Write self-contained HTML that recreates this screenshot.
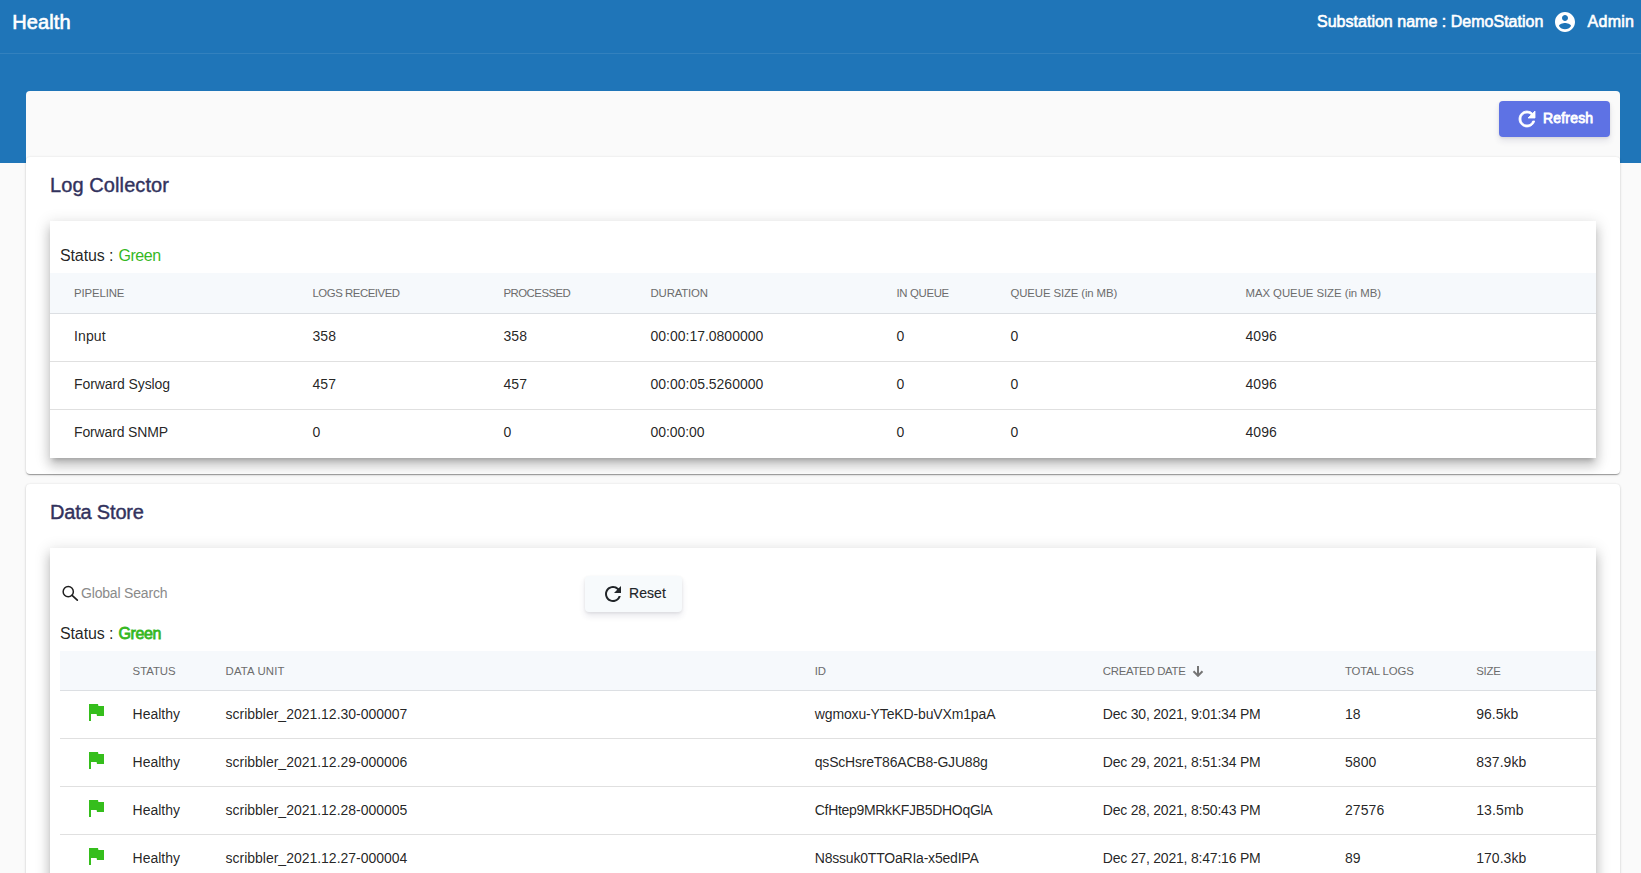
<!DOCTYPE html>
<html lang="en"><head><meta charset="utf-8"><title>Health</title>
<style>
html,body{margin:0;padding:0}
body{width:1641px;height:873px;overflow:hidden;background:#fafafa;font-family:"Liberation Sans", sans-serif;color:rgba(0,0,0,.87);position:relative}
.tx{white-space:nowrap}
.title,.sub,.admin{-webkit-text-stroke:.6px currentColor}
.btn-refresh .tx{-webkit-text-stroke:.8px currentColor}
.card h2{-webkit-text-stroke:.4px currentColor}
.status .b{-webkit-text-stroke:.8px currentColor}
.btn-reset .tx{-webkit-text-stroke:.15px currentColor}
.topbar{position:absolute;left:0;top:0;width:1641px;height:163px;background:#1f75b8}
.topbar .line{position:absolute;left:0;top:53px;width:100%;height:1px;background:rgba(255,255,255,.09)}
.title{position:absolute;left:12.2px;top:0;height:44px;line-height:44px;font-size:20px;font-weight:400;color:#fff}
.sub{position:absolute;left:1317px;top:0;height:43px;line-height:43px;font-size:16px;font-weight:400;color:#fff}
.acct{position:absolute;left:1553.2px;top:10px;width:24px;height:24px}
.admin{position:absolute;left:1587.6px;top:0;height:43px;line-height:43px;font-size:16px;font-weight:400;color:#fff}
.shell{position:absolute;left:26px;top:91px;width:1594px;height:120px;background:#fafafa;border-radius:4px}
.btn-refresh{position:absolute;left:1499px;top:101px;width:111px;height:36px;border-radius:4px;background:#5e72e4;color:#fff;box-shadow:0 4px 6px rgba(50,50,93,.11),0 1px 3px rgba(0,0,0,.08)}
.btn-refresh svg{position:absolute;left:16px;top:6px}
.btn-refresh .tx{position:absolute;left:44px;top:0;line-height:35px;font-size:14px;font-weight:400}
.card{position:absolute;left:26px;width:1594px;background:#fff;border-radius:4px;box-shadow:0 2px 1px -1px rgba(0,0,0,.2),0 1px 1px 0 rgba(0,0,0,.14),0 1px 3px 0 rgba(0,0,0,.12),0 0 2px 0 rgba(0,0,0,.08)}
.card h2{position:absolute;left:24px;top:12px;margin:0;font-size:20px;line-height:32px;font-weight:400;color:#32325d}
.inner{position:absolute;left:24px;top:64px;width:1546px;background:#fff;box-shadow:0 5px 5px -3px rgba(0,0,0,.2),0 8px 10px 1px rgba(0,0,0,.14),0 3px 14px 2px rgba(0,0,0,.12)}
.status{position:absolute;left:10px;font-size:16px;line-height:24px;color:rgba(0,0,0,.87)}
.status .g{color:#35b81f;margin-left:1px}
.tbl{position:absolute}
.hrow{position:relative;height:40px;background:#f6f9fc;border-bottom:1px solid #dcdfe3;box-sizing:border-box;font-size:11.4px;line-height:41px;color:#6c6c6c}
.row{position:relative;height:48px;border-bottom:1px solid #e0e0e0;box-sizing:border-box;font-size:14px;line-height:47px;color:rgba(0,0,0,.87)}
.row.last{border-bottom-color:transparent}
.hrow.lc{height:41px}
.row.lc{line-height:44px}
.c{position:absolute;top:0;white-space:nowrap}
.flag{position:absolute;left:0;top:9px}
.arrow{position:relative;top:2px;margin-left:6.5px}
.search{position:absolute;left:12px;top:37px}
.search-t{position:absolute;left:31px;top:33px;font-size:14px;line-height:24px;color:#8a8a8a}
.btn-reset{position:absolute;left:535px;top:28px;width:97px;height:36px;border-radius:4px;background:#f7fafc;color:#212529;box-shadow:0 4px 6px rgba(50,50,93,.11),0 1px 3px rgba(0,0,0,.08)}
.btn-reset svg{position:absolute;left:16px;top:6px}
.btn-reset .tx{position:absolute;left:44px;top:0;line-height:35px;font-size:14px;font-weight:400}
</style></head>
<body>
<div class="topbar"><div class="line"></div>
<div class="title"><span id="t1" class="tx " style="letter-spacing:0.125px;">Health</span></div>
<div class="sub"><span id="t2" class="tx " style="letter-spacing:0.017px;">Substation name : DemoStation</span></div>
<div class="acct"><svg viewBox="0 0 24 24" width="24" height="24"><path fill="#fff" d="M12 2C6.480 2 2 6.480 2 12s4.480 10 10 10 10-4.480 10-10S17.520 2 12 2zm0 3c1.660 0 3 1.340 3 3s-1.340 3-3 3-3-1.340-3-3 1.340-3 3-3zm0 14.200a7.200 7.200 0 0 1-6-3.220c.03-1.990 4-3.080 6-3.080 1.990 0 5.970 1.090 6 3.080a7.200 7.200 0 0 1-6 3.220z"/></svg></div>
<div class="admin"><span id="t3" class="tx " style="letter-spacing:0.237px;">Admin</span></div>
</div>
<div class="shell"></div>
<div class="btn-refresh"><svg viewBox="0 0 24 24" width="24" height="24"><path fill="currentColor" stroke="currentColor" stroke-width=".8" d="M17.65 6.35A7.958 7.958 0 0 0 12 4c-4.420 0-7.990 3.580-7.990 8s3.570 8 7.990 8c3.730 0 6.840-2.550 7.730-6h-2.080A5.990 5.990 0 0 1 12 18c-3.310 0-6-2.690-6-6s2.690-6 6-6c1.660 0 3.140.69 4.220 1.780L13 11h7V4l-2.350 2.350z"/></svg><span id="t4" class="tx " style="letter-spacing:0.181px;">Refresh</span></div>

<div class="card" style="top:157px;height:317px">
<h2><span id="t5" class="tx " style="letter-spacing:0.094px;">Log Collector</span></h2>
<div class="inner" style="height:237px">
<div class="status" style="top:23px"><span id="t6" class="tx " style="letter-spacing:-0.127px;">Status : </span><span id="t7" class="tx g" style="letter-spacing:-0.497px;">Green</span></div>
<div class="tbl" style="left:0;top:52px;width:1546px">
<div class="hrow lc"><div class="c" style="left:24px"><span id="t8" class="tx " style="letter-spacing:-0.117px;">PIPELINE</span></div><div class="c" style="left:262.5px"><span id="t9" class="tx " style="letter-spacing:-0.462px;">LOGS RECEIVED</span></div><div class="c" style="left:453.5px"><span id="t10" class="tx " style="letter-spacing:-0.526px;">PROCESSED</span></div><div class="c" style="left:600.5px"><span id="t11" class="tx " style="letter-spacing:-0.158px;">DURATION</span></div><div class="c" style="left:846.5px"><span id="t12" class="tx " style="letter-spacing:-0.350px;">IN QUEUE</span></div><div class="c" style="left:960.5px"><span id="t13" class="tx " style="letter-spacing:-0.127px;">QUEUE SIZE (in MB)</span></div><div class="c" style="left:1195.5px"><span id="t14" class="tx " style="letter-spacing:-0.056px;">MAX QUEUE SIZE (in MB)</span></div></div>
<div class="row lc"><div class="c" style="left:24px"><span id="t15" class="tx " style="letter-spacing:0.113px;">Input</span></div><div class="c" style="left:262.5px"><span id="t16" class="tx " style="letter-spacing:0.083px;">358</span></div><div class="c" style="left:453.5px"><span id="t17" class="tx " style="letter-spacing:0.083px;">358</span></div><div class="c" style="left:600.5px"><span id="t18" class="tx " style="letter-spacing:-0.008px;">00:00:17.0800000</span></div><div class="c" style="left:846.5px"><span id="t19" class="tx " style="letter-spacing:0.078px;">0</span></div><div class="c" style="left:960.5px"><span id="t20" class="tx " style="letter-spacing:0.078px;">0</span></div><div class="c" style="left:1195.5px"><span id="t21" class="tx " style="letter-spacing:0.082px;">4096</span></div></div>
<div class="row lc"><div class="c" style="left:24px"><span id="t22" class="tx " style="letter-spacing:-0.092px;">Forward Syslog</span></div><div class="c" style="left:262.5px"><span id="t23" class="tx " style="letter-spacing:0.083px;">457</span></div><div class="c" style="left:453.5px"><span id="t24" class="tx " style="letter-spacing:0.083px;">457</span></div><div class="c" style="left:600.5px"><span id="t25" class="tx " style="letter-spacing:-0.008px;">00:00:05.5260000</span></div><div class="c" style="left:846.5px"><span id="t26" class="tx " style="letter-spacing:0.078px;">0</span></div><div class="c" style="left:960.5px"><span id="t27" class="tx " style="letter-spacing:0.078px;">0</span></div><div class="c" style="left:1195.5px"><span id="t28" class="tx " style="letter-spacing:0.082px;">4096</span></div></div>
<div class="row lc last"><div class="c" style="left:24px"><span id="t29" class="tx " style="letter-spacing:-0.147px;">Forward SNMP</span></div><div class="c" style="left:262.5px"><span id="t30" class="tx " style="letter-spacing:0.078px;">0</span></div><div class="c" style="left:453.5px"><span id="t31" class="tx " style="letter-spacing:0.078px;">0</span></div><div class="c" style="left:600.5px"><span id="t32" class="tx " style="letter-spacing:-0.062px;">00:00:00</span></div><div class="c" style="left:846.5px"><span id="t33" class="tx " style="letter-spacing:0.078px;">0</span></div><div class="c" style="left:960.5px"><span id="t34" class="tx " style="letter-spacing:0.078px;">0</span></div><div class="c" style="left:1195.5px"><span id="t35" class="tx " style="letter-spacing:0.082px;">4096</span></div></div>
</div>
</div>
</div>

<div class="card" style="top:484px;height:420px">
<h2><span id="t36" class="tx " style="letter-spacing:-0.188px;">Data Store</span></h2>
<div class="inner" style="height:360px">
<div class="search"><svg viewBox="0 0 17 17" width="17" height="17"><circle cx="6.250" cy="6.650" r="5.100" fill="none" stroke="#1f1f1f" stroke-width="1.500"/><path d="M10.100 10.400L15.300 15.100" stroke="#1f1f1f" stroke-width="1.700" stroke-linecap="round"/></svg></div>
<div class="search-t"><span id="t37" class="tx " style="letter-spacing:-0.186px;">Global Search</span></div>
<div class="btn-reset"><svg viewBox="0 0 24 24" width="24" height="24"><path fill="currentColor" d="M17.65 6.35A7.958 7.958 0 0 0 12 4c-4.420 0-7.990 3.580-7.990 8s3.570 8 7.990 8c3.730 0 6.840-2.550 7.730-6h-2.080A5.990 5.990 0 0 1 12 18c-3.310 0-6-2.690-6-6s2.690-6 6-6c1.660 0 3.140.69 4.220 1.780L13 11h7V4l-2.350 2.350z"/></svg><span id="t38" class="tx " style="letter-spacing:0.064px;">Reset</span></div>
<div class="status" style="top:74px"><span id="t39" class="tx " style="letter-spacing:-0.127px;">Status : </span><span id="t40" class="tx g b" style="letter-spacing:-0.403px;font-weight:400">Green</span></div>
<div class="tbl" style="left:10px;top:103px;width:1536px">
<div class="hrow"><div class="c" style="left:72.6px"><span id="t41" class="tx " style="letter-spacing:-0.047px;">STATUS</span></div><div class="c" style="left:165.6px"><span id="t42" class="tx " style="letter-spacing:0.125px;">DATA UNIT</span></div><div class="c" style="left:754.8px"><span id="t43" class="tx " style="letter-spacing:-0.133px;">ID</span></div><div class="c" style="left:1042.8px"><span id="t44" class="tx " style="letter-spacing:-0.296px;">CREATED DATE</span><svg class="arrow" viewBox="0 0 12 12" width="12" height="12"><path d="M6 1v10M1.500 6.300L6 10.800l4.500-4.500" fill="none" stroke="#757575" stroke-width="2"/></svg></div><div class="c" style="left:1285px"><span id="t45" class="tx " style="letter-spacing:-0.136px;">TOTAL LOGS</span></div><div class="c" style="left:1416.2px"><span id="t46" class="tx " style="letter-spacing:-0.230px;">SIZE</span></div></div>
<div class="row"><div class="c" style="left:24px"><svg class="flag" viewBox="0 0 24 24" width="24" height="24"><path fill="#35be1c" d="M14.400 6L14 4H5v17h2v-7h5.600l.4 2h7V6z"/></svg></div><div class="c" style="left:72.6px"><span id="t47" class="tx " style="letter-spacing:-0.016px;">Healthy</span></div><div class="c" style="left:165.6px"><span id="t48" class="tx " style="letter-spacing:-0.015px;">scribbler_2021.12.30-000007</span></div><div class="c" style="left:754.8px"><span id="t49" class="tx " style="letter-spacing:-0.141px;">wgmoxu-YTeKD-buVXm1paA</span></div><div class="c" style="left:1042.8px"><span id="t50" class="tx " style="letter-spacing:-0.206px;">Dec 30, 2021, 9:01:34 PM</span></div><div class="c" style="left:1285px"><span id="t51" class="tx " style="letter-spacing:0.086px;">18</span></div><div class="c" style="left:1416.2px"><span id="t52" class="tx " style="letter-spacing:0.036px;">96.5kb</span></div></div>
<div class="row"><div class="c" style="left:24px"><svg class="flag" viewBox="0 0 24 24" width="24" height="24"><path fill="#35be1c" d="M14.400 6L14 4H5v17h2v-7h5.600l.4 2h7V6z"/></svg></div><div class="c" style="left:72.6px"><span id="t53" class="tx " style="letter-spacing:-0.016px;">Healthy</span></div><div class="c" style="left:165.6px"><span id="t54" class="tx " style="letter-spacing:-0.015px;">scribbler_2021.12.29-000006</span></div><div class="c" style="left:754.8px"><span id="t55" class="tx " style="letter-spacing:-0.212px;">qsScHsreT86ACB8-GJU88g</span></div><div class="c" style="left:1042.8px"><span id="t56" class="tx " style="letter-spacing:-0.206px;">Dec 29, 2021, 8:51:34 PM</span></div><div class="c" style="left:1285px"><span id="t57" class="tx " style="letter-spacing:0.082px;">5800</span></div><div class="c" style="left:1416.2px"><span id="t58" class="tx " style="letter-spacing:0.042px;">837.9kb</span></div></div>
<div class="row"><div class="c" style="left:24px"><svg class="flag" viewBox="0 0 24 24" width="24" height="24"><path fill="#35be1c" d="M14.400 6L14 4H5v17h2v-7h5.600l.4 2h7V6z"/></svg></div><div class="c" style="left:72.6px"><span id="t59" class="tx " style="letter-spacing:-0.016px;">Healthy</span></div><div class="c" style="left:165.6px"><span id="t60" class="tx " style="letter-spacing:-0.015px;">scribbler_2021.12.28-000005</span></div><div class="c" style="left:754.8px"><span id="t61" class="tx " style="letter-spacing:-0.312px;">CfHtep9MRkKFJB5DHOqGlA</span></div><div class="c" style="left:1042.8px"><span id="t62" class="tx " style="letter-spacing:-0.206px;">Dec 28, 2021, 8:50:43 PM</span></div><div class="c" style="left:1285px"><span id="t63" class="tx " style="letter-spacing:0.081px;">27576</span></div><div class="c" style="left:1416.2px"><span id="t64" class="tx " style="letter-spacing:0.122px;">13.5mb</span></div></div>
<div class="row"><div class="c" style="left:24px"><svg class="flag" viewBox="0 0 24 24" width="24" height="24"><path fill="#35be1c" d="M14.400 6L14 4H5v17h2v-7h5.600l.4 2h7V6z"/></svg></div><div class="c" style="left:72.6px"><span id="t65" class="tx " style="letter-spacing:-0.016px;">Healthy</span></div><div class="c" style="left:165.6px"><span id="t66" class="tx " style="letter-spacing:-0.015px;">scribbler_2021.12.27-000004</span></div><div class="c" style="left:754.8px"><span id="t67" class="tx " style="letter-spacing:-0.208px;">N8ssuk0TTOaRIa-x5edIPA</span></div><div class="c" style="left:1042.8px"><span id="t68" class="tx " style="letter-spacing:-0.206px;">Dec 27, 2021, 8:47:16 PM</span></div><div class="c" style="left:1285px"><span id="t69" class="tx " style="letter-spacing:0.086px;">89</span></div><div class="c" style="left:1416.2px"><span id="t70" class="tx " style="letter-spacing:0.042px;">170.3kb</span></div></div>
</div>
</div>
</div>
</body></html>
